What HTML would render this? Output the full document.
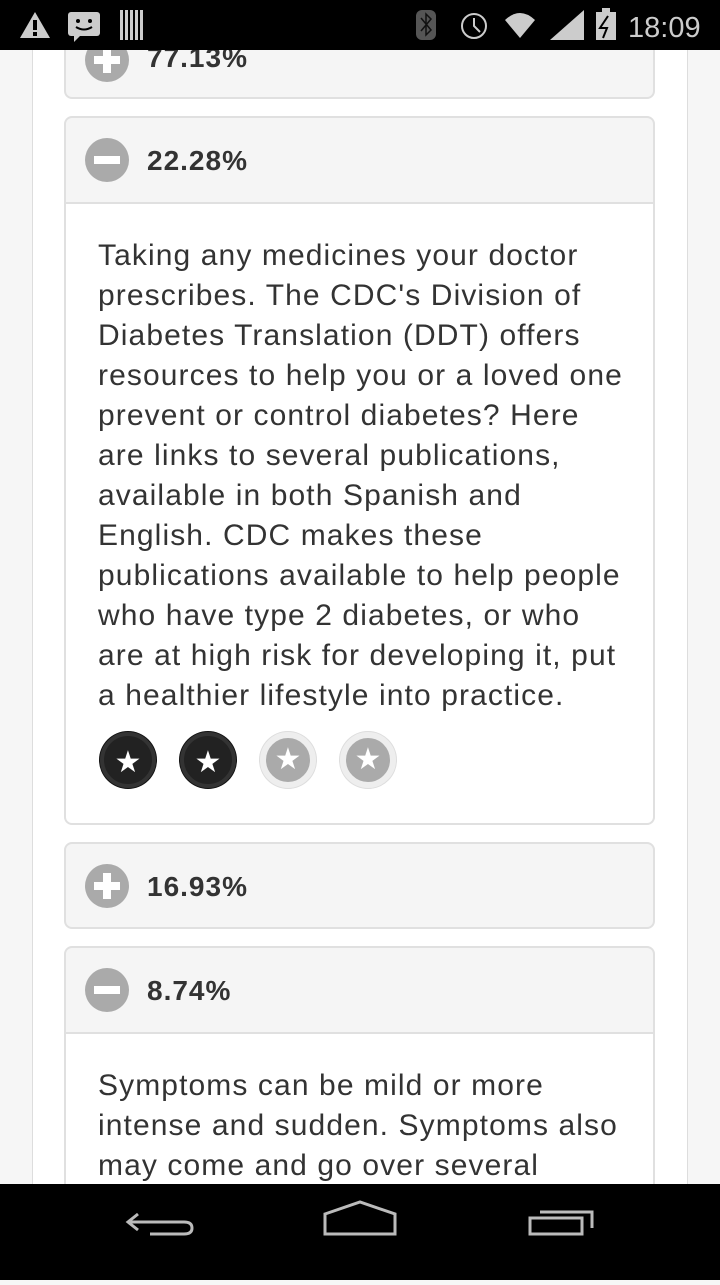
<!DOCTYPE html>
<html><head><style>
body{margin:0;width:720px;height:1280px;position:relative;overflow:hidden;background:#f6f6f6;font-family:"Liberation Sans",sans-serif;}
.page{position:absolute;left:32px;top:0;width:656px;height:1280px;background:#fff;border-left:1px solid #ddd;border-right:1px solid #ddd;box-sizing:border-box;}
.hd{position:absolute;left:64px;width:591px;background:#f5f5f5;border:2px solid #e0e0e0;box-sizing:border-box;border-radius:8px;}
.hd .t{position:absolute;left:81px;font-weight:bold;font-size:28px;letter-spacing:1px;color:#333;}
.ic{position:absolute;left:19px;width:44px;height:44px;border-radius:50%;background:#aaa;}
.ic:before{content:"";position:absolute;left:9px;top:18px;width:26px;height:8px;background:#fff;}
.ic.p:after{content:"";position:absolute;left:18px;top:9px;width:8px;height:26px;background:#fff;}
.bd{position:absolute;left:64px;width:591px;background:#fff;border:2px solid #e0e0e0;border-top:none;box-sizing:border-box;border-radius:0 0 8px 8px;}
.tx{position:absolute;left:32px;font-size:30px;letter-spacing:1.1px;line-height:40px;color:#333;white-space:nowrap;}
.st{position:absolute;top:732px;width:56px;height:56px;border-radius:50%;box-sizing:border-box;color:#fff;font-size:30px;text-align:center;line-height:54px;}
.st.on{background:#222;border:4px solid #333;box-shadow:0 0 0 1px #111;}
.st.off{background:#aaa;border:6px solid #eee;box-shadow:0 0 0 1px #ddd;}
.sb{position:absolute;left:0;top:0;width:720px;height:50px;background:#000;color:#ccc;}
.nb{position:absolute;left:0;top:1184px;width:720px;height:96px;background:#000;}
</style></head><body>
<div class="page"></div>
<div class="hd" style="top:0px;height:99px;"><div class="ic p" style="top:36px"></div><div class="t" style="top:40px">77.13%</div></div>
<div class="hd" style="top:116px;height:88px;border-radius:8px 8px 0 0;"><div class="ic" style="top:20px"></div><div class="t" style="top:27px">22.28%</div></div>
<div class="bd" style="top:204px;height:621px;">
<div class="tx" style="top:32px">Taking any medicines your doctor<br>prescribes. The CDC's Division of<br>Diabetes Translation (DDT) offers<br>resources to help you or a loved one<br>prevent or control diabetes? Here<br>are links to several publications,<br>available in both Spanish and<br>English. CDC makes these<br>publications available to help people<br>who have type 2 diabetes, or who<br>are at high risk for developing it, put<br>a healthier lifestyle into practice.</div>
</div>
<div class="st on" style="left:100px">★</div><div class="st on" style="left:180px">★</div><div class="st off" style="left:260px;line-height:44px">★</div><div class="st off" style="left:340px;line-height:44px">★</div>
<div class="hd" style="top:842px;height:87px;"><div class="ic p" style="top:20px"></div><div class="t" style="top:27px">16.93%</div></div>
<div class="hd" style="top:946px;height:88px;border-radius:8px 8px 0 0;"><div class="ic" style="top:20px"></div><div class="t" style="top:27px">8.74%</div></div>
<div class="bd" style="top:1034px;height:200px;">
<div class="tx" style="top:32px">Symptoms can be mild or more<br>intense and sudden. Symptoms also<br>may come and go over several</div>
</div>
<div class="sb">
<svg width="720" height="50" style="position:absolute;left:0;top:0">
<path d="M20 38 L35 12 L50 38 Z" fill="#ccc"/><rect x="33" y="20" width="4" height="10" fill="#000"/><rect x="33" y="32" width="4" height="4" fill="#000"/>
<rect x="68" y="12" width="32" height="24" rx="3" fill="#ccc"/><path d="M74 36 L74 42 L80 36Z" fill="#ccc"/><circle cx="78" cy="21" r="2" fill="#000"/><circle cx="90" cy="21" r="2" fill="#000"/><path d="M76 27 Q84 32 92 27" stroke="#000" stroke-width="2" fill="none"/>
<g fill="#ccc"><rect x="120" y="10" width="3" height="30"/><rect x="125" y="10" width="3" height="30"/><rect x="130" y="10" width="3" height="30"/><rect x="135" y="10" width="3" height="30"/><rect x="140" y="10" width="3" height="30"/></g>
<rect x="416" y="10" width="20" height="30" rx="6" fill="#555"/><path d="M421 18 L431 30 L426 35 L426 14 L431 19 L421 31" stroke="#111" stroke-width="1.5" fill="none"/>
<circle cx="474" cy="26" r="12" stroke="#ccc" stroke-width="2" fill="none"/><path d="M474 18 V26 L480 32" stroke="#ccc" stroke-width="2" fill="none"/>
<path d="M505 20 Q520 6 535 20 L520 38 Z" fill="#ccc"/>
<path d="M550 40 L584 40 L584 10 Z" fill="#ccc"/>
<rect x="596" y="12" width="20" height="28" fill="#ccc"/><rect x="602" y="8" width="8" height="4" fill="#ccc"/><path d="M608 16 L600 28 L607 28 L603 38" stroke="#000" stroke-width="2" fill="none"/>
<text x="628" y="37" font-family="Liberation Sans" font-size="29" fill="#ccc">18:09</text>
</svg></div>
<div class="nb"><svg width="720" height="96">
<path d="M138 30 L128 38 L138 46 M128 38 H184 Q192 38 192 44 Q192 50 184 50 H150" stroke="#bbb" stroke-width="3" fill="none"/>
<path d="M325 30 L360 18 L395 30 V50 H325 Z" stroke="#bbb" stroke-width="3" fill="none"/>
<rect x="530" y="34" width="52" height="16" stroke="#bbb" stroke-width="3" fill="none"/><path d="M540 28 H592 V44" stroke="#bbb" stroke-width="3" fill="none"/>
</svg></div>
</body></html>
